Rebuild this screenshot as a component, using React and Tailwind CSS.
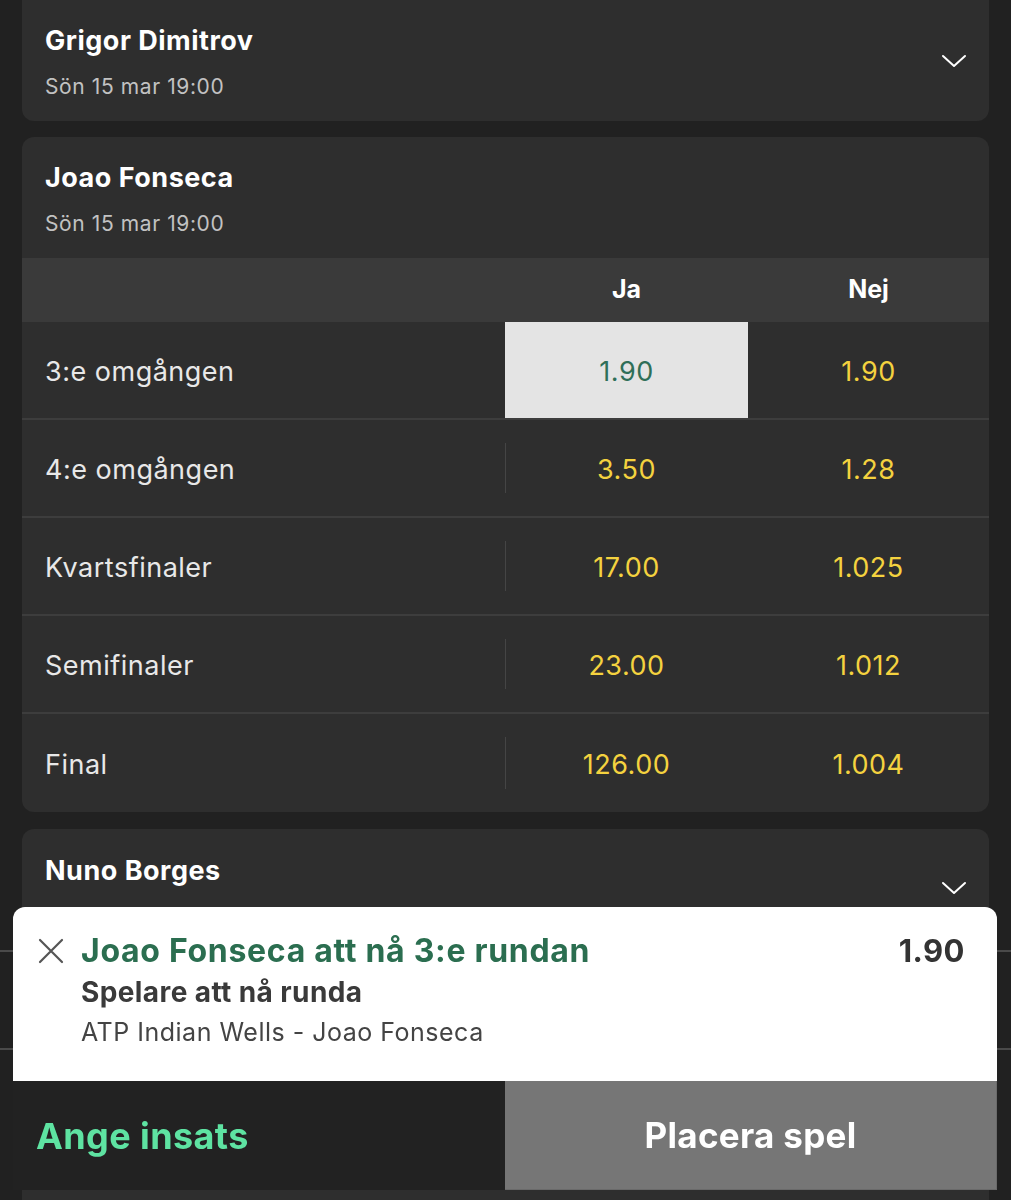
import React from "react";

const rows = [
  { label: "3:e omgången", ja: "1.90", nej: "1.90", selected: true },
  { label: "4:e omgången", ja: "3.50", nej: "1.28" },
  { label: "Kvartsfinaler", ja: "17.00", nej: "1.025" },
  { label: "Semifinaler", ja: "23.00", nej: "1.012" },
  { label: "Final", ja: "126.00", nej: "1.004" },
];

const Chevron = () => (
  <svg width="26" height="16" viewBox="0 0 26 16" fill="none">
    <path d="M2 3 L13 13 L24 3" stroke="#ffffff" strokeWidth="2" strokeLinecap="round" strokeLinejoin="round" />
  </svg>
);

const CardHeader = ({ name, date, chevron }) => (
  <div className="flex items-center justify-between h-[121px] pl-[23px] pr-[22px]">
    <div className="flex flex-col pt-[4px]">
      <span className="text-[27px] leading-[34px] font-bold tracking-[0.5px] text-white">{name}</span>
      {date && (
        <span className="mt-[15px] text-[21px] leading-[28px] tracking-[0.6px] text-[#c2c2c2]">{date}</span>
      )}
    </div>
    {chevron && <Chevron />}
  </div>
);

export default function App() {
  return (
    <div className="min-h-screen bg-[#212121] px-[22px] font-['Inter',sans-serif]">
      <div className="rounded-b-[12px] bg-[#2e2e2e]">
        <CardHeader name="Grigor Dimitrov" date="Sön 15 mar 19:00" chevron />
      </div>

      <div className="mt-[16px] rounded-[12px] bg-[#2e2e2e] overflow-hidden">
        <CardHeader name="Joao Fonseca" date="Sön 15 mar 19:00" />
        <div className="grid grid-cols-[483px_243px_1fr] h-[64px] bg-[#3a3a3a] items-center">
          <div />
          <div className="text-center text-[25px] font-bold text-white">Ja</div>
          <div className="text-center text-[25px] font-bold text-white">Nej</div>
        </div>
        {rows.map((r, i) => (
          <div
            key={r.label}
            className={`grid grid-cols-[483px_243px_1fr] h-[98px] text-[27px] tracking-[0.5px] ${
              i < rows.length - 1 ? "border-b-2 border-[#3d3d3d]" : ""
            }`}
          >
            <div className="flex items-center pl-[23px] pt-[5px] text-[#e8e8e8]">{r.label}</div>
            <div className="relative flex items-center justify-center">
              <div className="absolute left-0 top-[23px] bottom-[23px] w-px bg-[#454545]" />
              {r.selected ? (
                <div className="relative z-10 flex h-full w-full items-center justify-center pt-[5px] bg-[#e4e4e4] text-[#2f6f58]">
                  {r.ja}
                </div>
              ) : (
                <span className="pt-[5px] text-[#f4d23f]">{r.ja}</span>
              )}
            </div>
            <div className="flex items-center justify-center pt-[5px] text-[#f4d23f]">{r.nej}</div>
          </div>
        ))}
      </div>

      <div className="mt-[17px] rounded-t-[12px] bg-[#2e2e2e] h-[380px]">
        <div className="flex items-start justify-between pl-[23px] pr-[22px] pt-[25px]">
          <span className="text-[27px] leading-[34px] font-bold tracking-[0.5px] text-white">Nuno Borges</span>
          <div className="mt-[26px]">
            <Chevron />
          </div>
        </div>
      </div>

      <div className="fixed left-0 right-0 bottom-[10px] h-[283px]">
        <div className="absolute left-0 right-0 top-[43px] h-[2px] bg-[#4a4a4a]" />
        <div className="absolute left-0 right-0 top-[141px] h-[2px] bg-[#4a4a4a]" />
        <div className="relative mx-[13px] mr-[14px] flex h-full flex-col">
          <div className="flex h-[174px] rounded-t-[12px] bg-white pl-[24px] pr-[32px] pt-[25px]">
            <div className="mt-[5px] w-[44px] shrink-0">
              <svg width="28" height="28" viewBox="0 0 28 28" fill="none">
                <path d="M3 3 L25 25 M25 3 L3 25" stroke="#555555" strokeWidth="2.2" strokeLinecap="round" />
              </svg>
            </div>
            <div className="flex flex-1 flex-col">
              <div className="flex items-center justify-between">
                <span className="text-[32px] leading-[38px] font-bold tracking-[0.7px] text-[#2b6e50]">
                  Joao Fonseca att nå 3:e rundan
                </span>
                <span className="text-[31px] leading-[38px] font-bold tracking-[0.5px] text-[#333333]">1.90</span>
              </div>
              <span className="mt-[6px] text-[28px] leading-[32px] font-bold tracking-[0.4px] text-[#3a3a3a]">
                Spelare att nå runda
              </span>
              <span className="mt-[9px] text-[25px] leading-[30px] tracking-[0.5px] text-[#444444]">
                ATP Indian Wells - Joao Fonseca
              </span>
            </div>
          </div>
          <div className="flex h-[109px]">
            <div className="flex w-[492px] items-center bg-[#222222] pl-[23px] text-[36px] font-bold tracking-[0.4px] text-[#5ee3a2]">
              Ange insats
            </div>
            <div className="flex flex-1 items-center justify-center bg-[#767676] text-[35px] font-bold tracking-[0.3px] text-white border-r border-b border-[#6a6a6a]">
              Placera spel
            </div>
          </div>
        </div>
      </div>
    </div>
  );
}
